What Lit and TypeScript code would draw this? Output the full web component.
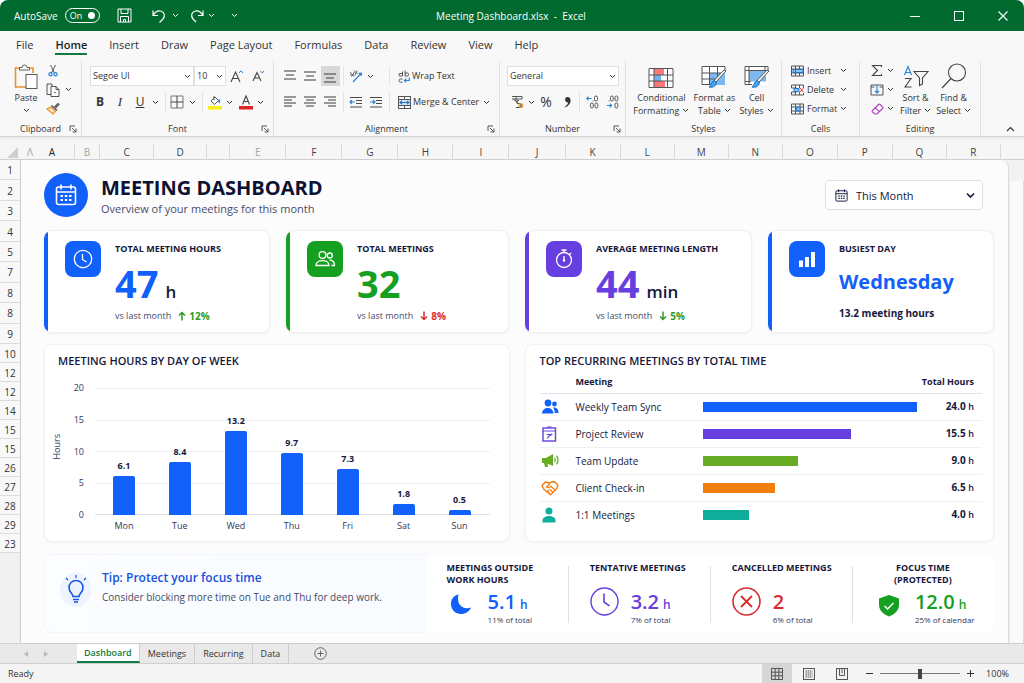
import { LitElement, html, svg, css, nothing, TemplateResult, SVGTemplateResult } from "lit";
import { customElement, property, state } from "lit/decorators.js";
import { classMap } from "lit/directives/class-map.js";
import { styleMap } from "lit/directives/style-map.js";

const icon = (w: number, h: number, body: SVGTemplateResult, cls = "") =>
  html`<svg class="ic ${cls}" width=${w} height=${h} viewBox="0 0 ${w} ${h}" fill="none" stroke="currentColor" aria-hidden="true">${body}</svg>`;

const chev = () => icon(7, 5, svg`<path d="M1 1l2.500 2.500L6 1" stroke-width="1"/>`);

const linesIcon = (rows: Array<[number, number]>, top: number, step: number) =>
  icon(14, 14, svg`${rows.map(([a, b], i) => svg`<path d="M${a} ${top + i * step}H${b}" stroke="#4a4a4a" stroke-width="1.1"/>`)}`);

const launcher = () =>
  icon(8, 8, svg`<path d="M1 6V1h5M3 3l3.500 3.500M7 3.500V7H3.500" stroke="#555" stroke-width="1"/>`);

const ribbonIcons = {
  paste: () => icon(24, 26, svg`
    <path d="M6.500 4H1.500v19H12" stroke="#e8912d" stroke-width="1.600"/><path d="M15 4h4v5" stroke="#e8912d" stroke-width="1.600"/>
    <path d="M5.500 6V3.500h2.500a2.500 2.500 0 0 1 5 0h2.500V6z" fill="#fff" stroke="#5b5b5b"/>
    <rect x="12" y="10.500" width="11" height="14" fill="#fff" stroke="#5b5b5b"/>`),
  cut: () => icon(10, 13, svg`
    <path d="M2.500 1l4 8M7.500 1l-4 8" stroke="#555"/><circle cx="2.500" cy="10.300" r="1.600" stroke="#2a84d8" stroke-width="1.200"/><circle cx="7.500" cy="10.300" r="1.600" stroke="#2a84d8" stroke-width="1.200"/>`),
  copy: () => icon(14, 14, svg`
    <path d="M5 11.500H1V1h5v2" stroke="#555"/><path d="M5 3.500h5l3 3v7H5z M10 3.500v3h3" fill="#fafafa" stroke="#555"/><circle cx="9" cy="9.500" r=".8" fill="#555" stroke="none"/>`),
  brush: () => icon(14, 13, svg`
    <path d="M8.500 5L12 1.500l1 1L9.500 6" stroke="#555" stroke-width="1.100"/><path d="M5.500 3.500l5.500 5" stroke="#555" stroke-width="1.600"/>
    <path d="M4.500 5L1 7l6 5 2.500-3z" fill="#fbe3c4" stroke="#e8912d" stroke-width="1.200"/>`),
  grow: () => icon(14, 14, svg`
    <path d="M1 13L5.500 3 10 13M2.600 9.500h5.800" stroke="#444" stroke-width="1.100"/><path d="M9 4l2-2.200L13 4" stroke="#2a84d8"/>`),
  shrink: () => icon(13, 12, svg`
    <path d="M1 11L5 2.500 9 11M2.400 8h5.200" stroke="#444" stroke-width="1.100"/><path d="M8.500 1l1.800 2L12 1" stroke="#2a84d8"/>`),
  borders: () => icon(14, 14, svg`<path d="M1 1h12v12H1z" stroke="#777"/><path d="M7 1v12M1 7h12" stroke="#444"/>`),
  fill: () => icon(14, 15, svg`
    <rect x="0" y="11" width="14" height="3.500" fill="#f7ee1b" stroke="none"/><path d="M3 6l4-4 3.500 3.500L6.500 9.500z M6 1v4" stroke="#555"/><path d="M11 4c1.500 1 1.500 3 .5 4.500L9.800 6z" fill="#2a84d8" stroke="none"/>`),
  fontColor: () => icon(14, 15, svg`
    <rect x="0" y="11" width="14" height="3.500" fill="#e02424" stroke="none"/><path d="M3.500 9.500L7 1l3.500 8.500M4.700 6.500h4.600" stroke="#444" stroke-width="1.100"/>`),
  orient: () => icon(14, 14, svg`
    <path d="M4 13L12.500 4M12.500 4l-3 .3M12.500 4l-.3 3" stroke="#2a84d8" stroke-width="1.200"/><path d="M1 3l4 4.500M2.500 7.500l3-4.500M1 6h4M5 1.500l3.500 3.500M8 1.500L6 6.500" stroke="#666"/>`),
  wrap: () => icon(12, 13, svg`
    <path d="M4.500 1.500v4.500H2a1.200 1.200 0 0 1 0-2.500h2.500M7 .5V6h2.200a1.500 1.500 0 0 0 0-3H7M4.500 9H2.600a1.600 1.600 0 0 0 0 3.200H4.500" stroke="#555"/><path d="M11.300 7.500v3H6.500M8.300 8.700l-1.900 1.900 1.900 1.800" stroke="#2a84d8" stroke-width="1.200"/>`),
  merge: () => icon(13, 13, svg`
    <rect x=".5" y=".5" width="12" height="12" stroke="#555"/><path d="M.5 3.500h12M.5 9.500h12M6.500 .5v3M6.500 9.500v3" stroke="#555"/><rect x="1" y="4" width="11" height="5" fill="#cfe5fa" stroke="none"/><path d="M2 6.500h9M4 4.800L2 6.500l2 1.700M9 4.800l2 1.700-2 1.700" stroke="#1d6fc4" stroke-width="1.100"/>`),
  outdent: () => icon(14, 13, svg`
    <path d="M1 1.500h12M7 4.500h6M7 7.500h6M1 11h12" stroke="#4a4a4a" stroke-width="1.100"/><path d="M6 6H1M3 4L1 6l2 2" stroke="#2a84d8" stroke-width="1.200"/>`),
  indent: () => icon(14, 13, svg`
    <path d="M1 1.500h12M7 4.500h6M7 7.500h6M1 11h12" stroke="#4a4a4a" stroke-width="1.100"/><path d="M1 6h5M4 4l2 2-2 2" stroke="#2a84d8" stroke-width="1.200"/>`),
  currency: () => icon(13, 14, svg`
    <path d="M1 1.500h10M1 4h10M5 1.500v5L2.500 4M11 1.500V4" stroke="#555"/><path d="M8 5.500c-3 0-3 3 0 3s3 4 0 4h-3" stroke="#444" stroke-width="1.200"/><circle cx="9.800" cy="10.500" r="2" stroke="#e8a23d" stroke-width="1.200"/>`),
  comma: () => icon(9, 12, svg`<path d="M4.500 1a2.700 2.700 0 1 0 .6 5.400C4.800 8 3.700 9.400 2 10.300l.6.900C5.800 9.900 7.700 7.300 7.600 4.300 7.500 2.200 6.200 1 4.500 1z" fill="#333" stroke="none"/>`),
  decInc: () => icon(13, 14, svg`
    <path d="M5.500 3.500H.8M2.500 1.700L.7 3.500l1.800 1.800" stroke="#2a84d8" stroke-width="1.100"/><rect x="8.500" y="1" width="3" height="5" rx="1.500" stroke="#555"/><rect x="4.500" y="8" width="2.800" height="5" rx="1.400" stroke="#555"/><rect x="9" y="8" width="2.800" height="5" rx="1.400" stroke="#555"/><path d="M6.500 6h1" stroke="#555"/>`),
  decDec: () => icon(13, 14, svg`
    <path d="M.8 10.500h4.700M3.800 8.700l1.800 1.800-1.800 1.800" stroke="#2a84d8" stroke-width="1.100"/><rect x="4.500" y="1" width="2.800" height="5" rx="1.400" stroke="#555"/><rect x="9" y="1" width="2.800" height="5" rx="1.400" stroke="#555"/><rect x="9" y="8" width="2.800" height="5" rx="1.400" stroke="#555"/><path d="M2.500 6h1" stroke="#555"/>`),
  conditional: () => icon(26, 22, svg`
    <rect x="1" y="1.500" width="24" height="19" fill="#fff" stroke="none"/>
    <rect x="6" y="2" width="10" height="6" fill="#f77" stroke="none"/><rect x="6" y="8" width="7" height="6" fill="#6fb3ee" stroke="none"/><rect x="6" y="14" width="11" height="6" fill="#f77" stroke="none"/>
    <path d="M1 1.500h24v19H1zM1 8h24M1 14h24M6 1.500v19M19.500 1.500v19" stroke="#555"/>`),
  formatTable: () => icon(26, 24, svg`
    <rect x="1" y="1.500" width="23" height="18" fill="#fff" stroke="none"/><rect x="8.500" y="8" width="15.500" height="12" fill="#7db9f0" stroke="none"/>
    <path d="M24 6V1.500H1v18h9M1 8h20M1 14h14M8.500 1.500v18M16.500 1.500v11" stroke="#555"/>
    <path d="M25 6L15 17l-2-1.500L23 5z" fill="#fff" stroke="#555"/><path d="M13 15.500l2.500 2c-.5 4-4.500 5.500-7.500 4.500 2-1 2-5 5-6.500z" fill="#4aa0ee" stroke="#1d6fc4"/>`),
  cellStyles: () => icon(26, 24, svg`
    <rect x="1" y="1.500" width="23" height="18" fill="#fff" stroke="none"/><rect x="5" y="5.500" width="17" height="11" fill="#7db9f0" stroke="none"/>
    <path d="M24 6V1.500H1v18h7M1 5.500h23M5 1.500v18M1 16.500h6M21 1.500v4" stroke="#555"/>
    <path d="M25 6L15 17l-2-1.500L23 5z" fill="#fff" stroke="#555"/><path d="M13 15.500l2.500 2c-.5 4-4.500 5.500-7.500 4.500 2-1 2-5 5-6.500z" fill="#4aa0ee" stroke="#1d6fc4"/>`),
  insert: () => icon(13, 12, svg`
    <path d="M.5 1h12v10H.5zM.5 4h12M.5 8h12M4.500 1v10M8.500 1v10" stroke="#555"/><path d="M2 4.500h10v3H2z" fill="#8cc4f5" stroke="#1d78d0"/><path d="M6 4l-2 2 2 2" stroke="#1d78d0"/>`),
  del: () => icon(13, 12, svg`
    <path d="M.5 4V1h12v3M.5 8v3h12V9M4.500 1v3M8.500 1v3M4.500 8v3M8.500 8v3M.5 4h5M.5 8h5" stroke="#555"/><path d="M3 4.500h5v3H3z" fill="#8cc4f5" stroke="#1d78d0"/><path d="M9 4l3.500 4M12.500 4L9 8" stroke="#e03c3c"/>`),
  format: () => icon(13, 12, svg`
    <path d="M.5 1h12v10H.5zM.5 4h12M.5 8h12M4.500 1v10M9 1v10" stroke="#555"/><path d="M4.500 4h4.500v4H4.500z" fill="#8cc4f5" stroke="#1d78d0"/><path d="M7 4L5 6l2 2" stroke="#1d78d0"/>`),
  sum: () => icon(12, 13, svg`<path d="M10.500 3V1.500h-9l5 5-5 5h9V10" stroke="#444" stroke-width="1.100"/>`),
  fillDown: () => icon(14, 12, svg`<path d="M1 1h12v10H1zM1 3h3.500M9.500 3H13" stroke="#555"/><path d="M7 1v8M5 7l2 2 2-2" stroke="#2a84d8" stroke-width="1.200"/>`),
  erase: () => icon(13, 12, svg`<path d="M1.500 7.500l6-6a1.200 1.200 0 0 1 1.700 0l2.300 2.300a1.200 1.200 0 0 1 0 1.700l-5.500 5.500H4L1.500 9a1 1 0 0 1 0-1.500zM4.500 4.800l4 4" stroke="#b146c2" stroke-width="1.200"/>`),
  sort: () => icon(26, 24, svg`
    <path d="M1.500 10L5 1.500 8.500 10M2.700 7.500h4.600" stroke="#2a84d8" stroke-width="1.200"/><path d="M2 13.500h6L2 22h6.500" stroke="#444" stroke-width="1.100"/>
    <path d="M11 6.500h14l-5.500 6.500v6l-3 1.500V13z" stroke="#444" stroke-width="1.100"/>`),
  find: () => icon(26, 26, svg`<circle cx="16" cy="9.500" r="8.500" stroke="#444" stroke-width="1.100"/><path d="M10 15.500L1 25" stroke="#444" stroke-width="1.200"/>`),
};

const calendar = (s: number, cls = "") => html`
  <svg class=${cls} width=${s} height=${s} viewBox="0 0 22 22" fill="none" stroke="currentColor" stroke-width="1.600" aria-hidden="true">
    <rect x="1.500" y="3" width="19" height="17.500" rx="2"/><path d="M1.500 8h19M6 .5v5M16 .5v5"/>
    <path d="M5.500 11h2.500v2H5.500zM9.800 11h2.500v2H9.800zM14 11h2.500v2H14zM5.500 15h2.500v2H5.500zM9.800 15h2.500v2H9.800zM14 15h2.500v2H14z" fill="currentColor" stroke="none"/>
  </svg>`;

interface Kpi {
  tone: string;
  label: string;
  value: string;
  unit?: string;
  trend?: { dir: "up" | "down"; text: string; tone: string };
  note?: string;
  glyph: TemplateResult;
}

const kpis: Kpi[] = [
  {
    tone: "blue", label: "TOTAL MEETING HOURS", value: "47", unit: "h",
    trend: { dir: "up", text: "12%", tone: "good" },
    glyph: icon(22, 22, svg`<circle cx="11" cy="11" r="8.700" stroke-width="1.300"/><path d="M10.500 6v5.500l4 2.500" stroke-width="1.300"/>`),
  },
  {
    tone: "green", label: "TOTAL MEETINGS", value: "32",
    trend: { dir: "down", text: "8%", tone: "bad" },
    glyph: icon(22, 22, svg`<circle cx="8.500" cy="7" r="3.300" stroke-width="1.300"/><path d="M2 17.500c0-6.500 13-6.500 13 0z" stroke-width="1.300"/><circle cx="15.800" cy="7.500" r="2.500" stroke-width="1.300"/><path d="M15.500 12.200c3.500 0 5 2 5 5.300h-3" stroke-width="1.300"/>`),
  },
  {
    tone: "violet", label: "AVERAGE MEETING LENGTH", value: "44", unit: "min",
    trend: { dir: "down", text: "5%", tone: "good" },
    glyph: icon(22, 22, svg`<circle cx="11" cy="12" r="7.500" stroke-width="1.300"/><path d="M11 4.500V2M8.500 2h5M16.500 6.500L18 5M11 8v5" stroke-width="1.400"/><circle cx="11" cy="12.500" r="1.200" fill="currentColor" stroke="none"/>`),
  },
  {
    tone: "blue", label: "BUSIEST DAY", value: "Wednesday", note: "13.2 meeting hours",
    glyph: icon(22, 22, svg`<path d="M3 12.500h4V19H3zM9 9h4v10H9zM15 4h4v15h-4z" fill="currentColor" stroke="none"/>`),
  },
];

const week = [
  { day: "Mon", hours: 6.1 },
  { day: "Tue", hours: 8.4 },
  { day: "Wed", hours: 13.2 },
  { day: "Thu", hours: 9.7 },
  { day: "Fri", hours: 7.3 },
  { day: "Sat", hours: 1.8 },
  { day: "Sun", hours: 0.5 },
];

const recurring = [
  {
    name: "Weekly Team Sync", hours: "24.0", share: 100, tone: "blue",
    glyph: icon(18, 16, svg`<g fill="currentColor" stroke="none"><circle cx="7" cy="4" r="3.400"/><path d="M1 14.500c0-7.500 11.500-7.500 11.500 0z"/><circle cx="13.500" cy="5" r="2.400"/><path d="M12 8.500c4-.5 5.500 2 5.500 5.500h-3.800c0-2.500-.5-4-1.700-5.500z"/></g>`),
  },
  {
    name: "Project Review", hours: "15.5", share: 69, tone: "violet",
    glyph: icon(16, 16, svg`<rect x="2" y="2" width="12.500" height="13" stroke-width="1.400"/><path d="M2 5h12.500M6 1h4.500M5.500 8.500h6M7 11l4-3M6.500 12.500l1-2" stroke-width="1.200"/>`),
  },
  {
    name: "Team Update", hours: "9.0", share: 44.5, tone: "lime",
    glyph: icon(18, 16, svg`<path d="M1 5h4l7-4v12L6.500 10.500 7 14H4L3 10H1z" fill="currentColor" stroke="none"/><path d="M13.500 5c1 1 1 3 0 4M15.500 2.800c2 2.200 2 6.200 0 8.400" stroke-width="1.300"/>`),
  },
  {
    name: "Client Check-in", hours: "6.5", share: 34, tone: "orange",
    glyph: icon(18, 16, svg`<path d="M1 5.500L4.500 2 8 3l3-1.200L14 2l3 3.500-2 4-5.500 5.300L3 9.500z" stroke-width="1.400" stroke-linejoin="round"/><path d="M9 3.500L5.500 7c1.500 1.200 3 .5 4-.8l5 4M6 10l2.500 2.500M8.500 9l3 3" stroke-width="1.200"/>`),
  },
  {
    name: "1:1 Meetings", hours: "4.0", share: 21.6, tone: "teal",
    glyph: icon(16, 16, svg`<g fill="currentColor" stroke="none"><circle cx="8" cy="4" r="3.500"/><path d="M1.500 15.500v-2c0-6 13-6 13 0v2z"/></g>`),
  },
];

const stats = [
  {
    label: "MEETINGS OUTSIDE WORK HOURS", value: "5.1", unit: "h", note: "11% of total", tone: "blue", centered: false,
    glyph: icon(29, 29, svg`<path d="M9.500 8C6 9.500 4 13 4 17c0 6 4.500 10 10 10 4.500 0 8.500-2.500 10-6.500C16 23 9 18 11.500 7.500z" fill="currentColor" stroke="none"/>`),
  },
  {
    label: "TENTATIVE MEETINGS", value: "3.2", unit: "h", note: "7% of total", tone: "violet", centered: false,
    glyph: icon(29, 29, svg`<circle cx="14.500" cy="14.500" r="13.500" stroke-width="1.400"/><path d="M14 6.500V15l5.500 3.800" stroke-width="1.600"/>`),
  },
  {
    label: "CANCELLED MEETINGS", value: "2", unit: "", note: "6% of total", tone: "red", centered: false,
    glyph: icon(29, 29, svg`<circle cx="14.500" cy="14.500" r="13.500" stroke-width="1.600"/><path d="M9 9l11 11M20 9L9 20" stroke-width="1.800"/>`),
  },
  {
    label: "FOCUS TIME (PROTECTED)", value: "12.0", unit: "h", note: "25% of calendar", tone: "green", centered: true,
    glyph: icon(29, 29, svg`<path d="M15 8l10 3.500v6c0 6-4 9.500-10 12-6-2.500-10-6-10-12v-6z" fill="currentColor" stroke="none"/><path d="M10.500 19l3 3 6-6" stroke="#fff" stroke-width="1.500"/>`),
  },
];

const tabs = ["File", "Home", "Insert", "Draw", "Page Layout", "Formulas", "Data", "Review", "View", "Help"];
const columns = ["A", "B", "C", "D", "", "E", "F", "G", "H", "I", "J", "K", "L", "M", "N", "O", "P", "Q", "R", ""];
const faint = new Set(["B", "E"]);
const upperRows = ["1", "2", "3", "4", "5", "7", "8", "8", "9"];
const lowerRows = ["10", "12", "12", "14", "15", "15", "26", "27", "28", "29", "23"];

const shared = css`
  * { box-sizing: border-box; }
  button, select, input { font: inherit; color: inherit; }
  button { border: 0; padding: 0; background: none; cursor: pointer; }
  .ic { display: block; flex: none; overflow: visible; }
  .blue { --tone: #1260fa; }
  .green { --tone: #16a022; }
  .violet { --tone: #673ee0; }
  .lime { --tone: #68ab25; }
  .orange { --tone: #f07f0c; }
  .teal { --tone: #0fae9c; }
  .red { --tone: #dc2a2f; }
`;

@customElement("excel-ribbon")
export class ExcelRibbon extends LitElement {
  static styles = [shared, css`
    :host { display: flex; height: 80px; padding-top: 4px; background: #f8f8f8; border-bottom: 1px solid #d6d6d6; box-shadow: 0 2px 3px #0000000f; font-size: 9px; line-height: 12px; color: #333; z-index: 1; }
    .group { display: flex; flex-direction: column; flex: none; border-right: 1px solid #e1e1e1; }
    .clip { width: 82px; }
    .font { width: 192px; }
    .align { width: 226px; }
    .number { width: 126px; }
    .styles { width: 156px; }
    .cells { width: 78px; }
    .editing { width: 121px; }
    .body { flex: 1; display: flex; }
    .stack { flex-direction: column; }
    .foot { display: grid; grid-template-columns: 12px 1fr 12px; align-items: center; height: 14px; text-align: center; }
    .foot span { grid-column: 2; }
    .row { display: grid; height: 26px; align-items: center; justify-items: center; }
    .row button { display: flex; align-items: center; justify-content: center; gap: 2px; height: 20px; min-width: 0; white-space: nowrap; }
    .r-font1 { grid-template-columns: 136px 22px 20px; padding-left: 8px; margin-top: 2px; }
    .r-font2 { grid-template-columns: 20px 20px 20px 10px 10px 14px 16px 4px 21px 9px 23px 7px; padding-left: 8px; }
    .r-al1, .r-al2 { padding-left: 6px; justify-content: start; }
    .r-al1 { grid-template-columns: 20px 20px 20px 6px 20px 8px 16px 90px; margin-top: 2px; }
    .r-al2 { grid-template-columns: 20px 20px 20px 6px 20px 20px 4px 92px 8px; }
    .r-num1 { padding: 0 6px 0 7px; margin-top: 2px; justify-items: stretch; }
    .r-num2 { grid-template-columns: 20px 8px 22px 20px 5px 20px 20px; padding-left: 7px; }
    .row .lead { justify-self: start; padding-left: 8px; }
    .sep { width: 1px; height: 20px; background: #e3e3e3; }
    .edge { justify-self: end; }
    .on { background: #d8d8d8; width: 19px; }
    .pair { display: grid; grid-template-columns: 104px 32px; }
    .field { display: grid; align-items: center; background: #fff; border: 1px solid #e0e0e0; height: 20px; font-size: 9px; }
    .field select { grid-area: 1 / 1; appearance: none; border: 0; background: none; width: 100%; height: 18px; padding: 0 2px; line-height: 18px; outline: 0; }
    .field .ic { grid-area: 1 / 1; justify-self: end; margin-right: 2px; pointer-events: none; }
    .b { font-weight: 700; font-size: 12px; }
    .i { font-style: italic; font-family: "Liberation Serif", serif; font-size: 13px; }
    .u { text-decoration: underline; font-size: 12px; }
    .pct { font-size: 14px; }
    .clip .body { padding-left: 11px; }
    .big { display: flex; flex-direction: column; align-items: center; line-height: 13px; text-align: center; }
    .big span { display: flex; align-items: center; gap: 3px; }
    .paste { width: 30px; padding-top: 3px; }
    .paste .ic + span { line-height: 14px; }
    .paste .ic:first-child { margin-bottom: 1px; }
    .paste .ic:last-child { margin-top: 3px; }
    .tools { display: grid; grid-template-columns: 20px 10px; grid-template-rows: repeat(3, 19px); align-items: center; justify-items: center; padding-left: 2px; }
    .tall { display: grid; height: 26px; margin-bottom: 2px; place-items: end center; }
    .styles .body { justify-content: center; gap: 4px; padding-top: 2px; }
    .list { display: grid; grid-template-columns: 1fr; grid-template-rows: repeat(3, 19px); padding: 0 11px 0 9px; width: 100%; }
    .list button { display: grid; grid-template-columns: 16px 1fr 8px; align-items: center; text-align: left; }
    .edit { display: grid; grid-template-rows: repeat(3, 19px); width: 40px; padding-left: 9px; }
    .edit button { display: grid; grid-template-columns: 16px 10px; align-items: center; justify-items: center; }
    .e2 { display: flex; gap: 5px; padding-top: 2px; }
    .rest { flex: 1; display: flex; align-items: flex-end; justify-content: flex-end; padding: 0 9px 4px 0; }
  `];

  private foot(name: string, launch = false) {
    return html`<div class="foot"><span>${name}</span>${launch ? html`<button aria-label="${name} settings">${launcher()}</button>` : nothing}</div>`;
  }

  private tool(label: string, body: unknown, cls = "") {
    return html`<button class=${cls} aria-label=${label}>${body}</button>`;
  }

  private big(glyph: TemplateResult, a: string, b: string) {
    return html`<button class="big"><div class="tall">${glyph}</div><span>${a}</span><span>${b}${chev()}</span></button>`;
  }

  render() {
    const r = ribbonIcons;
    const left: Array<[number, number]> = [[1, 13], [1, 9], [1, 13], [1, 9]];
    const mid: Array<[number, number]> = [[1, 13], [3, 11], [1, 13], [3, 11]];
    const right: Array<[number, number]> = [[1, 13], [5, 13], [1, 13], [5, 13]];
    const three: Array<[number, number]> = [[1, 13], [3, 11], [1, 13]];
    return html`
      <section class="group clip">
        <div class="body">
          <button class="big paste">${r.paste()}<span>Paste</span>${chev()}</button>
          <div class="tools">
            ${this.tool("Cut", r.cut())}<i></i>
            ${this.tool("Copy", r.copy())}${this.tool("Copy options", chev())}
            ${this.tool("Format Painter", r.brush())}
          </div>
        </div>
        ${this.foot("Clipboard", true)}
      </section>

      <section class="group font">
        <div class="body stack">
          <div class="row r-font1">
            <div class="pair">
              <label class="field"><select aria-label="Font name"><option>Segoe UI</option></select>${chev()}</label>
              <label class="field"><select aria-label="Font size"><option>10</option></select>${chev()}</label>
            </div>
            ${this.tool("Increase font size", r.grow())}${this.tool("Decrease font size", r.shrink())}
          </div>
          <div class="row r-font2">
            ${this.tool("Bold", "B", "b")}${this.tool("Italic", "I", "i")}${this.tool("Underline", "U", "u")}${this.tool("Underline options", chev())}
            <i class="sep"></i>${this.tool("Borders", r.borders())}${this.tool("Border options", chev())}
            <i class="sep"></i>${this.tool("Fill colour", r.fill())}${this.tool("Fill options", chev())}
            ${this.tool("Font colour", r.fontColor())}${this.tool("Font colour options", chev())}
          </div>
        </div>
        ${this.foot("Font", true)}
      </section>

      <section class="group align">
        <div class="body stack">
          <div class="row r-al1">
            ${this.tool("Top align", linesIcon(three, 2, 4))}${this.tool("Middle align", linesIcon(three, 3, 4))}${this.tool("Bottom align", linesIcon(three, 5, 4), "on")}
            <i class="sep"></i>${this.tool("Orientation", r.orient())}${this.tool("Orientation options", chev())}
            <i class="sep edge"></i><button class="lead">${r.wrap()}Wrap Text</button>
          </div>
          <div class="row r-al2">
            ${this.tool("Align left", linesIcon(left, 2, 3))}${this.tool("Centre", linesIcon(mid, 2, 3))}${this.tool("Align right", linesIcon(right, 2, 3))}
            <i class="sep"></i>${this.tool("Decrease indent", r.outdent())}${this.tool("Increase indent", r.indent())}
            <i class="sep edge"></i><button class="lead">${r.merge()}Merge &amp; Center</button>${this.tool("Merge options", chev())}
          </div>
        </div>
        ${this.foot("Alignment", true)}
      </section>

      <section class="group number">
        <div class="body stack">
          <div class="row r-num1">
            <label class="field"><select aria-label="Number format"><option>General</option></select>${chev()}</label>
          </div>
          <div class="row r-num2">
            ${this.tool("Currency", r.currency())}${this.tool("Currency options", chev())}
            ${this.tool("Percent", "%", "pct")}${this.tool("Comma style", r.comma())}
            <i class="sep"></i>${this.tool("Increase decimal", r.decInc())}${this.tool("Decrease decimal", r.decDec())}
          </div>
        </div>
        ${this.foot("Number", true)}
      </section>

      <section class="group styles">
        <div class="body">
          ${this.big(r.conditional(), "Conditional", "Formatting")}
          ${this.big(r.formatTable(), "Format as", "Table")}
          ${this.big(r.cellStyles(), "Cell", "Styles")}
        </div>
        ${this.foot("Styles")}
      </section>

      <section class="group cells">
        <div class="body">
          <div class="list">
            <button>${r.insert()}<span>Insert</span>${chev()}</button>
            <button>${r.del()}<span>Delete</span>${chev()}</button>
            <button>${r.format()}<span>Format</span>${chev()}</button>
          </div>
        </div>
        ${this.foot("Cells")}
      </section>

      <section class="group editing">
        <div class="body">
          <div class="edit">
            <button aria-label="AutoSum">${r.sum()}${chev()}</button>
            <button aria-label="Fill">${r.fillDown()}${chev()}</button>
            <button aria-label="Clear">${r.erase()}${chev()}</button>
          </div>
          <div class="e2">${this.big(r.sort(), "Sort &", "Filter")}${this.big(r.find(), "Find &", "Select")}</div>
        </div>
        ${this.foot("Editing")}
      </section>
      <div class="rest"><button aria-label="Collapse ribbon">${icon(9, 6, svg`<path d="M1 5l3.500-3.500L8 5" stroke-width="1.200"/>`)}</button></div>
    `;
  }
}

@customElement("kpi-card")
export class KpiCard extends LitElement {
  @property({ attribute: false }) data!: Kpi;

  static styles = [shared, css`
    :host { display: block; }
    .card { display: flex; gap: 14px; height: 100%; padding: 10px 8px 0 21px; background: linear-gradient(90deg, var(--tone) 4px, #fff 4px); border: 1px solid #efeff2; border-left: 0; border-radius: 8px; box-shadow: 0 1px 3px #0000000d; }
    .badge { display: grid; place-items: center; flex: none; width: 36px; height: 36px; border-radius: 8px; color: #fff; background: var(--tone); }
    .text { display: flex; flex-direction: column; color: #15183c; white-space: nowrap; }
    h2 { margin: 0; font-size: 9px; line-height: 16px; font-weight: 700; }
    .value { display: flex; align-items: baseline; gap: 7px; margin-top: 6px; height: 40px; font-size: 38px; line-height: 40px; font-weight: 700; color: var(--tone); }
    .value small { font-size: 17px; font-weight: 600; color: #15183c; }
    .word { font-size: 20px; line-height: 38px; }
    .trend { display: flex; align-items: center; gap: 7px; margin-top: 5px; font-size: 9px; line-height: 16px; color: #474b69; }
    .trend b { display: flex; align-items: center; gap: 3px; font-size: 10px; font-weight: 700; }
    .good { color: #2f9a24; }
    .bad { color: #dc2a2f; }
    .note { margin-top: 2px; font-size: 10px; line-height: 16px; font-weight: 700; }
  `];

  render() {
    const d = this.data;
    return html`
      <article class="card ${d.tone}">
        <div class="badge">${d.glyph}</div>
        <div class="text">
          <h2>${d.label}</h2>
          <div class=${classMap({ value: true, word: !!d.note })}>${d.value}${d.unit ? html`<small>${d.unit}</small>` : nothing}</div>
          ${d.trend ? html`<div class="trend">vs last month
            <b class=${d.trend.tone}>${icon(8, 10, d.trend.dir === "up"
              ? svg`<path d="M4 9.500V1.500M1 4.500l3-3 3 3" stroke-width="1.500"/>`
              : svg`<path d="M4 .5v8M1 5.500l3 3 3-3" stroke-width="1.500"/>`)}${d.trend.text}</b></div>`
            : html`<div class="note">${d.note}</div>`}
        </div>
      </article>`;
  }
}

@customElement("hours-chart")
export class HoursChart extends LitElement {
  static styles = [shared, css`
    :host { display: grid; grid-template-columns: 16px 26px 1fr; grid-template-rows: 127px 24px; font-size: 9px; line-height: 12px; color: #33375a; }
    .title { align-self: center; writing-mode: vertical-rl; transform: rotate(180deg); padding-top: 10px; }
    .scale { display: flex; flex-direction: column; justify-content: space-between; margin: -6px 0; text-align: right; padding-right: 9px; }
    .plot, .lines { grid-column: 3; grid-row: 1; }
    .lines { display: flex; flex-direction: column; justify-content: space-between; padding-left: 2px; }
    .lines i { height: 1px; background: #f0f0f3; }
    .lines i:last-child { background: #dfe1e8; }
    .plot { display: grid; grid-template-columns: repeat(7, 1fr); padding: 0 2px 0 3px; z-index: 1; }
    .slot { display: flex; flex-direction: column; align-items: center; justify-content: flex-end; }
    .slot b { font-size: 9px; line-height: 12px; font-weight: 700; margin-bottom: 4px; color: #15183c; }
    .bar { width: 22px; min-height: 5px; flex: none; background: #1260fa; border-radius: 2px 2px 0 0; }
    .days { grid-column: 3; display: grid; grid-template-columns: repeat(7, 1fr); padding: 5px 2px 0 3px; text-align: center; }
  `];

  render() {
    return html`
      <div class="title">Hours</div>
      <div class="scale">${[20, 15, 10, 5, 0].map((n) => html`<span>${n}</span>`)}</div>
      <div class="lines">${[0, 1, 2, 3, 4].map(() => html`<i></i>`)}</div>
      <div class="plot">${week.map((w) => html`<div class="slot"><b>${w.hours.toFixed(1)}</b><div class="bar" style=${styleMap({ height: `${(w.hours / 20) * 100}%` })}></div></div>`)}</div>
      <div class="days">${week.map((w) => html`<span>${w.day}</span>`)}</div>`;
  }
}

@customElement("app-root")
export class AppRoot extends LitElement {
  @state() private tab = "Home";
  @state() private sheet = "Dashboard";

  static styles = [shared, css`
    :host { display: flex; flex-direction: column; min-height: 100vh; overflow: hidden; border-radius: 8px 8px 0 0; background: #f3f3f3; font-family: "Open Sans", "Noto Sans", sans-serif; font-size: 10px; color: #333; }

    .titlebar { display: grid; grid-template-columns: 1fr auto 1fr; align-items: center; height: 31px; padding: 0 16px 0 14px; background: #006a2f; color: #fff; font-size: 10px; }
    .quick { display: flex; align-items: center; }
    .toggle { display: flex; align-items: center; justify-content: space-between; width: 35px; height: 15px; margin: 0 17px 0 7px; padding: 0 4px; border: 1px solid #fff; border-radius: 8px; font-size: 9px; line-height: 13px; }
    .toggle i { width: 7px; height: 7px; border-radius: 50%; background: #fff; }
    .quick .undo { margin-left: 20px; display: flex; align-items: center; gap: 6px; }
    .quick .redo { margin-left: 11px; display: flex; align-items: center; gap: 4px; }
    .quick .more { margin-left: 16px; }
    .wins { display: flex; justify-content: flex-end; align-items: center; gap: 34px; }

    .tabs { display: flex; gap: 22px; height: 26px; padding: 6px 16px 0; background: #f8f8f8; font-size: 11px; line-height: 16px; }
    .tabs button { height: 18px; border-bottom: 2px solid transparent; white-space: nowrap; }
    .tabs .active { font-weight: 600; color: #1c1c1c; border-color: #0f7b41; }

    .cols { display: grid; grid-template-columns: 20px 55fr 25fr 54fr 53fr 23fr 56fr 56fr 56fr 55fr 56fr 56fr 55fr 54fr 54fr 54fr 55fr 55fr 54fr 54fr 23fr; height: 23px; padding-top: 7px; background: #f6f6f6; border-bottom: 1px solid #cfcfcf; font-size: 10px; line-height: 16px; text-align: center; color: #444; }
    .cols span { border-right: 1px solid #d9d9d9; }
    .cols span:last-child { border: 0; }
    .cols .first { display: flex; justify-content: space-between; padding: 0 19px 0 7px; color: #222; }
    .cols .first i, .cols .faint { color: #a5a5a5; font-style: normal; }
    .corner { display: grid; place-items: center end; padding-right: 2px; }

    .work { flex: 1; display: grid; grid-template-columns: 21px 1fr 15px; }
    .rows { display: flex; flex-direction: column; border-right: 1px solid #cfcfcf; background: #f1f1f1; color: #333; font-size: 10px; text-align: center; }
    .upper, .lower { display: flex; flex-direction: column; }
    .upper { height: 184px; }
    .lower { height: 209px; }
    .rows span { flex: 1; display: grid; place-items: center; padding-top: 1px; background: #f8f8f8; border-bottom: 1px solid #dcdcdc; }
    .gutter { padding-top: 21px; background: #f1f2f1; }
    .gutter div { height: 100%; margin-left: 2px; background: #fafafa; border-right: 1px solid #dcdcdc; }

    .page { display: flex; flex-direction: column; padding: 13px 14px 10px 23px; background: #fcfcfc; border-right: 1px solid #d9dadc; border-top-right-radius: 8px; }
    .head { display: flex; align-items: center; gap: 13px; height: 44px; }
    .disc { display: grid; place-items: center; width: 44px; height: 44px; border-radius: 50%; background: #1260fa; color: #fff; }
    .names { flex: 1; padding-top: 4px; }
    h1 { margin: 0; font-size: 20px; line-height: 24px; font-weight: 700; color: #0b1233; }
    .names p { margin: 0; font-size: 11px; line-height: 18px; color: #474b69; }
    .period { display: grid; grid-template-columns: 31px 1fr 24px; align-items: center; width: 158px; height: 30px; margin-right: 11px; border: 1px solid #dfe0e6; border-radius: 4px; background: #fff; color: #15183c; }
    .period select { grid-area: 1 / 1 / 2 / 4; appearance: none; border: 0; background: none; height: 28px; padding: 0 24px 0 30px; font-size: 11px; outline: 0; }
    .period .cal { grid-area: 1 / 1; justify-self: center; }
    .period .ic { grid-area: 1 / 3; justify-self: center; }

    .kpis { display: grid; grid-template-columns: 226fr 223fr 227fr 226fr; gap: 16px; height: 103px; margin-top: 13px; }
    .panels { display: grid; grid-template-columns: 466fr 470fr; gap: 15px; margin-top: 11px; }
    .panel { height: 198px; background: #fff; border: 1px solid #f1f1f4; border-radius: 8px; box-shadow: 0 1px 3px #0000000a; }
    .panel h2 { margin: 0; font-size: 11px; line-height: 16px; font-weight: 600; color: #15183c; }
    .chart { padding: 8px 19px 0 13px; }
    .chart hours-chart { margin: 19px 0 0 -7px; }
    .top { padding: 8px 11px 0 14px; }

    table { width: 100%; margin-top: 3px; border-collapse: collapse; table-layout: fixed; color: #15183c; font-size: 10px; }
    .c1 { width: 36px; }
    .c2 { width: 127px; }
    .c4 { width: 65px; }
    th { height: 21px; padding: 0; font-size: 9px; line-height: 12px; font-weight: 700; text-align: left; border-bottom: 1px solid #e3e4e9; }
    td { height: 27px; padding: 0; border-bottom: 1px solid #f0f0f3; line-height: 14px; }
    tr:last-child td { border: 0; }
    td .ic { color: var(--tone); margin-left: 1px; }
    .meter { height: 10px; background: var(--tone); }
    th.num, td.num { text-align: right; padding-right: 8px; font-weight: 700; }
    td.num small { font-size: 9px; font-weight: 600; }

    .bottom { display: grid; grid-template-columns: 382fr 569fr; height: 79px; margin-top: 12px; }
    .tip { display: flex; gap: 11px; padding: 15px; border: 1px solid #f1f5fb; border-right: 0; border-radius: 8px 0 0 8px; background: linear-gradient(90deg, #fbfdff, #f8fbff); }
    .bulb { display: grid; place-items: center; width: 31px; height: 34px; margin-top: 3px; border-radius: 50%; background: #edf4ff; color: #1a56e0; }
    .tip h2 { margin: 0; font-size: 12px; line-height: 16px; font-weight: 600; color: #1550e0; }
    .tip p { margin: 3px 0 0; font-size: 10px; line-height: 16px; color: #474b69; }
    .stats { display: grid; grid-template-columns: repeat(4, 1fr); background: #fff; border-radius: 8px; }
    .stat { display: flex; flex-direction: column; padding: 8px 0 6px 21px; }
    .stat + .stat { border-left: 1px solid #e3e4ea; border-image: linear-gradient(#fff 16%, #dfe0e6 16%, #dfe0e6 86%, #fff 86%) 1; }
    .stat h3 { margin: 0; height: 25px; width: 108px; font-size: 9px; line-height: 12px; font-weight: 700; color: #15183c; }
    .stat.mid h3 { text-align: center; width: 98px; padding: 0 12px; }
    .pack { display: flex; gap: 12px; color: var(--tone); }
    .stat .val { display: flex; align-items: baseline; gap: 4px; font-size: 20px; line-height: 26px; font-weight: 600; height: 25px; margin-top: 2px; }
    .val small { font-size: 12px; }
    .stat p { margin: 0; font-size: 8px; line-height: 12px; color: #33375a; white-space: nowrap; }

    .sheets { display: flex; height: 21px; background: #e9e9e9; border-top: 1px solid #cfcfcf; border-bottom: 1px solid #d0d0d0; font-size: 9px; line-height: 18px; }
    .steps { display: flex; align-items: center; justify-content: flex-end; gap: 16px; width: 77px; padding-right: 29px; color: #b9b9b9; }
    .sheets > button { padding: 0 8px; border-right: 1px solid #cdcdcd; }
    .sheets > .current { padding: 0 7px; background: #fff; color: #107c41; font-weight: 600; border-bottom: 2px solid #107c41; }
    .sheets > .add { display: grid; place-items: center; margin-left: 17px; border: 0; color: #666; }

    .status { display: flex; align-items: center; height: 19px; padding: 0 15px 0 8px; background: #f4f4f4; font-size: 9px; }
    .status .ready { flex: 1; }
    .views { display: flex; height: 19px; }
    .views button { display: grid; place-items: center; width: 33px; color: #555; }
    .views .sel { width: 30px; background: #d6d6d6; }
    .zoom { display: flex; align-items: center; gap: 7px; margin-left: 8px; }
    .zoom input { appearance: none; width: 80px; height: 12px; margin: 0; background: linear-gradient(#777, #777) center / 100% 1px no-repeat; }
    .zoom input::-webkit-slider-thumb { appearance: none; width: 4px; height: 10px; background: #444; }
    .zoom output { margin-left: 5px; }
  `];

  render() {
    return html`
      <header class="titlebar">
        <div class="quick">
          <span>AutoSave</span>
          <button class="toggle" role="switch" aria-checked="true" aria-label="AutoSave">On<i></i></button>
          <button aria-label="Save">${icon(15, 15, svg`<path d="M1 1h13v13H1zM4 1v4.500h7V1M3.500 14V8.500h8V14M6.500 14v-2.500h2V14"/>`)}</button>
          <div class="undo">
            <button aria-label="Undo">${icon(14, 14, svg`<path d="M1 1.500v5h5M1 6.500C3 3 6 1.500 8.500 2c4 .8 5 5 2.500 8l-3.500 3.500" stroke-width="1.200"/>`)}</button>
            <button aria-label="Undo history">${chev()}</button>
          </div>
          <div class="redo">
            <button aria-label="Redo">${icon(14, 14, svg`<path d="M13 1.500v5H8M13 6.500C11 3 8 1.500 5.500 2c-4 .8-5 5-2.500 8L6 13" stroke-width="1.200"/>`)}</button>
            <button aria-label="Redo history">${chev()}</button>
          </div>
          <button class="more" aria-label="Customize toolbar">${chev()}</button>
        </div>
        <span>Meeting Dashboard.xlsx&nbsp; -&nbsp; Excel</span>
        <div class="wins">
          <button aria-label="Minimize">${icon(10, 10, svg`<path d="M0 5.500h10"/>`)}</button>
          <button aria-label="Maximize">${icon(10, 10, svg`<rect x=".5" y=".5" width="9" height="9"/>`)}</button>
          <button aria-label="Close">${icon(10, 10, svg`<path d="M.5 .5l9 9M9.500 .5l-9 9" stroke-width="1.100"/>`)}</button>
        </div>
      </header>

      <nav class="tabs">
        ${tabs.map((t) => html`<button class=${classMap({ active: t === this.tab })} @click=${() => (this.tab = t)}>${t}</button>`)}
      </nav>
      <excel-ribbon></excel-ribbon>

      <div class="cols">
        <div class="corner">${icon(11, 11, svg`<path d="M11 0v11H0z" fill="#cfcfcf" stroke="none"/>`)}</div>
        ${columns.map((c, i) => i === 0 ? html`<span class="first"><i>Λ</i>A</span>` : html`<span class=${classMap({ faint: faint.has(c) })}>${c}</span>`)}
      </div>

      <div class="work">
        <div class="rows">
          <div class="upper">${upperRows.map((n) => html`<span>${n}</span>`)}</div>
          <div class="lower">${lowerRows.map((n) => html`<span>${n}</span>`)}</div>
        </div>

        <main class="page">
          <div class="head">
            <div class="disc">${calendar(22)}</div>
            <div class="names"><h1>MEETING DASHBOARD</h1><p>Overview of your meetings for this month</p></div>
            <label class="period">
              <select aria-label="Period"><option>This Month</option></select>
              ${calendar(13, "cal")}${icon(9, 7, svg`<path d="M1 1.500l3.500 3.500L8 1.500" stroke-width="1.600"/>`)}
            </label>
          </div>

          <div class="kpis">${kpis.map((k) => html`<kpi-card .data=${k}></kpi-card>`)}</div>

          <div class="panels">
            <section class="panel chart">
              <h2>MEETING HOURS BY DAY OF WEEK</h2>
              <hours-chart></hours-chart>
            </section>
            <section class="panel top">
              <h2>TOP RECURRING MEETINGS BY TOTAL TIME</h2>
              <table>
                <colgroup><col class="c1"><col class="c2"><col><col class="c4"></colgroup>
                <thead><tr><th></th><th>Meeting</th><th></th><th class="num">Total Hours</th></tr></thead>
                <tbody>
                  ${recurring.map((m) => html`<tr class=${m.tone}>
                    <td>${m.glyph}</td><td>${m.name}</td>
                    <td><div class="meter" style=${styleMap({ width: `${m.share}%` })}></div></td>
                    <td class="num">${m.hours} <small>h</small></td></tr>`)}
                </tbody>
              </table>
            </section>
          </div>

          <div class="bottom">
            <section class="tip">
              <div class="bulb">${icon(22, 30, svg`<path d="M8 21.500c0-3-4-4-4-9a7 7 0 0 1 14 0c0 5-4 6-4 9z" stroke-width="1.600"/><path d="M8 24.500h6M9 27h4" stroke-width="1.500"/><path d="M11 3V0M3 5L1 3M19 5l2-2" stroke-width="1.200"/>`)}</div>
              <div><h2>Tip: Protect your focus time</h2><p>Consider blocking more time on Tue and Thu for deep work.</p></div>
            </section>
            <section class="stats">
              ${stats.map((s) => html`<div class="stat ${s.tone} ${s.centered ? "mid" : ""}">
                <h3>${s.label}</h3>
                <div class="pack">${s.glyph}<div><div class="val">${s.value}${s.unit ? html`<small>${s.unit}</small>` : nothing}</div><p>${s.note}</p></div></div>
              </div>`)}
            </section>
          </div>
        </main>
        <div class="gutter"><div></div></div>
      </div>

      <nav class="sheets">
        <div class="steps">
          <button aria-label="Previous sheet">${icon(4, 6, svg`<path d="M4 0v6L0 3z" fill="currentColor" stroke="none"/>`)}</button>
          <button aria-label="Next sheet">${icon(4, 6, svg`<path d="M0 0v6l4-3z" fill="currentColor" stroke="none"/>`)}</button>
        </div>
        ${["Dashboard", "Meetings", "Recurring", "Data"].map((s) => html`<button class=${classMap({ current: s === this.sheet })} @click=${() => (this.sheet = s)}>${s}</button>`)}
        <button class="add" aria-label="New sheet">${icon(13, 13, svg`<circle cx="6.500" cy="6.500" r="5.800"/><path d="M3.500 6.500h6M6.500 3.500v6"/>`)}</button>
      </nav>

      <footer class="status">
        <span class="ready">Ready</span>
        <div class="views">
          <button class="sel" aria-label="Normal view">${icon(12, 12, svg`<path d="M.5 .5h11v11H.5zM.5 4.200h11M.5 7.800h11M4.200 .5v11M7.800 .5v11"/>`)}</button>
          <button aria-label="Page layout view">${icon(12, 12, svg`<rect x=".5" y=".5" width="11" height="11"/><path d="M2.500 3h7M2.500 5h7M2.500 7h7M2.500 9h7" stroke-dasharray="1.500 .6"/>`)}</button>
          <button aria-label="Page break view">${icon(12, 12, svg`<rect x=".5" y=".5" width="11" height="11"/><path d="M3.500 .5v7h5V.5M6 .5v5"/>`)}</button>
        </div>
        <div class="zoom">
          <button aria-label="Zoom out">${icon(7, 7, svg`<path d="M0 3.500h7"/>`)}</button>
          <input type="range" min="0" max="200" value="100" aria-label="Zoom">
          <button aria-label="Zoom in">${icon(7, 7, svg`<path d="M0 3.500h7M3.500 0v7"/>`)}</button>
          <output>100%</output>
        </div>
      </footer>
    `;
  }
}
